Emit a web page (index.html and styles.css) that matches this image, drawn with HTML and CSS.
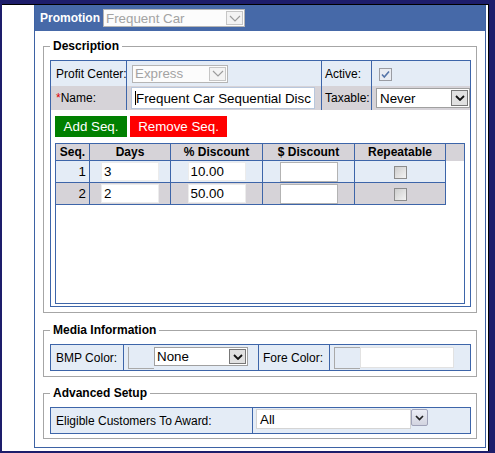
FILE: index.html
```html
<!DOCTYPE html>
<html lang="en">
<head>
<meta charset="utf-8">
<title>Promotion</title>
<link rel="stylesheet" href="styles.css">
</head>
<body>
<div class="window">
  <div class="client">
    <div class="main">
      <div class="titlebar">
        <span class="title">Promotion</span>
        <div class="sel dis sel-promo">
          <span class="sv">Frequent Car</span>
          <span class="sa"><svg class="chev" width="12" height="7" viewBox="0 0 12 7"><path d="M1 1 L6 6 L11 1"/></svg></span>
        </div>
      </div>

      <fieldset class="fs fs-desc">
        <legend>Description</legend>
        <div class="outer">
          <div class="props">
            <div class="cell lbl c1 lt">Profit Center:</div>
            <div class="cell c2 lt">
              <div class="sel dis sel-pc">
                <span class="sv">Express</span>
                <span class="sa"><svg class="chev" width="12" height="7" viewBox="0 0 12 7"><path d="M1 1 L6 6 L11 1"/></svg></span>
              </div>
            </div>
            <div class="cell lbl c3 lt">Active:</div>
            <div class="cell c4 lt">
              <svg class="chk" width="13" height="13" viewBox="0 0 13 13"><rect x="0.5" y="0.5" width="12" height="12" fill="#e9ecf2" stroke="#9a9ca3"/><path d="M3 6.5 L5.3 9 L10 3.5" fill="none" stroke="#5574a8" stroke-width="1.6"/></svg>
            </div>
            <div class="cell lbl c1 gr"><span class="req">*</span>Name:</div>
            <div class="cell c2 gr">
              <span class="namewrap"><input class="name" type="text" value="Frequent Car Sequential Discount"><span class="caret"></span></span>
            </div>
            <div class="cell lbl c3 gr">Taxable:</div>
            <div class="cell c4 gr">
              <div class="sel en sel-tax">
                <span class="sv">Never</span>
                <span class="sa"><svg class="chev" width="10" height="6" viewBox="0 0 10 6"><path d="M1 1 L5 5 L9 1"/></svg></span>
              </div>
            </div>
          </div>

          <div class="actions">
            <button class="btn btn-add" type="button">Add Seq.</button>
            <button class="btn btn-rem" type="button">Remove Seq.</button>
          </div>

          <div class="gridbox">
            <table class="grid">
              <thead>
                <tr>
                  <th class="w-seq">Seq.</th>
                  <th class="w-days">Days</th>
                  <th class="w-pct">% Discount</th>
                  <th class="w-amt">$ Discount</th>
                  <th class="w-rep">Repeatable</th>
                  <th class="w-fill fill"></th>
                </tr>
              </thead>
              <tbody>
                <tr class="odd">
                  <td class="num">1</td>
                  <td><input class="gin" type="text" value="3"></td>
                  <td><input class="gin" type="text" value="10.00"></td>
                  <td><input class="gin amt" type="text" value=""></td>
                  <td><span class="cb"></span></td>
                  <td class="fill"></td>
                </tr>
                <tr class="even">
                  <td class="num">2</td>
                  <td><input class="gin" type="text" value="2"></td>
                  <td><input class="gin" type="text" value="50.00"></td>
                  <td><input class="gin amt" type="text" value=""></td>
                  <td><span class="cb"></span></td>
                  <td class="fill"></td>
                </tr>
              </tbody>
            </table>
          </div>
        </div>
      </fieldset>

      <fieldset class="fs fs-media">
        <legend>Media Information</legend>
        <div class="outer">
          <div class="mrow">
            <div class="cell lbl m1">BMP Color:</div>
            <div class="cell m2">
              <span class="swatch sw-bmp"></span>
              <div class="sel en sel-none">
                <span class="sv">None</span>
                <span class="sa"><svg class="chev" width="10" height="6" viewBox="0 0 10 6"><path d="M1 1 L5 5 L9 1"/></svg></span>
              </div>
            </div>
            <div class="cell lbl m3">Fore Color:</div>
            <div class="cell m4">
              <span class="swatch sw-fore"></span>
              <input class="fore" type="text" value="">
            </div>
          </div>
        </div>
      </fieldset>

      <fieldset class="fs fs-adv">
        <legend>Advanced Setup</legend>
        <div class="outer">
          <div class="arow">
            <div class="cell lbl a1">Eligible Customers To Award:</div>
            <div class="cell a2">
              <div class="sel-all">
                <span class="av">All</span>
                <span class="ab"><svg width="9" height="6" viewBox="0 0 9 6"><path d="M1 1 L4.5 4.5 L8 1" fill="none" stroke="#222" stroke-width="1.7"/></svg></span>
              </div>
            </div>
          </div>
        </div>
      </fieldset>
    </div>
  </div>
</div>
</body>
</html>
```

FILE: styles.css
```css
* { box-sizing: border-box; }

html, body {
  margin: 0;
  padding: 0;
}

body {
  width: 495px;
  height: 453px;
  overflow: hidden;
  background: #fff;
  font-family: "Liberation Sans", Arial, sans-serif;
  font-size: 12px;
  color: #000;
}

.window {
  width: 495px;
  height: 453px;
  border-style: solid;
  border-color: #1d1d6b;
  border-width: 4px 6px 2px 2px;
  background: #fff;
}

.client {
  height: 447px;
  border-top: 1px solid #000;
  border-right: 1px solid #000;
  padding-left: 32px;
  display: flex;
}

.main {
  width: 452px;
  height: 443px;
  border: 1px solid #3d62a4;
  border-top: 0;
  display: flex;
  flex-direction: column;
}

/* title bar */
.titlebar {
  height: 26px;
  flex: none;
  background: #4669a8;
  display: flex;
  align-items: center;
  padding-left: 5px;
  gap: 3px;
}

.title {
  color: #fff;
  font-weight: bold;
  font-size: 12px;
}

/* fake selects */
.sel {
  display: flex;
  background: #fff;
  font-size: 13.33px;
  border: 1px solid #a9a9a9;
}

.sel .sv {
  flex: 1;
  padding-left: 2px;
  white-space: nowrap;
  overflow: hidden;
  display: flex;
  align-items: center;
}

.sel .sa {
  width: 19px;
  flex: none;
  display: flex;
  align-items: center;
  justify-content: center;
}

.chev path {
  fill: none;
}

.dis {
  color: #a3a3a3;
  border-color: #b5b5b5;
  background: #fcfcfc;
}

.dis .sa {
  border: 1px solid #c6c6c6;
  background: #f3f3f3;
  margin: 1px;
  width: 17px;
}

.dis .chev path {
  stroke: #9c9c9c;
  stroke-width: 1.2;
}

.en {
  border-color: #a0a0a0;
}

.en .sa {
  background: #e1e1e1;
  border: 1px solid #777;
  margin: 1px;
  width: 17px;
}

.en .chev path {
  stroke: #111;
  stroke-width: 1.8;
}

.sel-promo {
  width: 142px;
  height: 18px;
}

.sel-pc {
  width: 96px;
  height: 18px;
  margin-left: 1px;
}

.sel-tax {
  width: 94px;
  height: 20px;
}

.sel-tax .sv {
  padding-left: 3px;
}

/* fieldsets */
.fs {
  margin: 0 8px;
  border: 1px solid #a6a6a6;
  padding: 6px 5px 5px 6px;
  min-width: 0;
}

.fs legend {
  font-weight: bold;
  font-size: 12px;
  line-height: 15px;
  padding: 0 3px;
  margin: 0;
}

.fs-desc { margin-top: 8px; }
.fs-media { margin-top: 10px; }
.fs-adv { margin-top: 9px; padding-bottom: 4px; }

.outer {
  width: 421px;
  border: 1px solid #3d65a9;
}

.cell {
  display: flex;
  align-items: center;
  border-right: 1px solid #3d65a9;
  white-space: nowrap;
}

.lt { background: #e4ecf6; }
.gr { background: #d6d3d8; }

/* description properties */
.props {
  display: grid;
  grid-template-columns: 76px 195px 50px 98px;
  grid-template-rows: 25px 24px;
}

.c1 { padding-left: 5px; }
.c2 { padding-left: 4px; }
.c3 { padding-left: 3px; }
.c4 { padding-left: 4px; border-right: 0; }

.chk {
  display: block;
  margin-left: 3px;
  margin-top: 1px;
}

.req { color: #e00000; }

.namewrap {
  position: relative;
  display: block;
}

.name {
  display: block;
  width: 184px;
  height: 22px;
  margin: 0;
  border: 1px solid #b9c7dc;
  padding: 0 3px 0 4px;
  font-family: "Liberation Sans", Arial, sans-serif;
  font-size: 13.33px;
  color: #000;
  background: #fff;
  outline: none;
}

.caret {
  position: absolute;
  left: 4px;
  top: 4px;
  width: 1px;
  height: 14px;
  background: #000;
}

/* buttons */
.actions {
  display: flex;
  gap: 3px;
  padding: 6px 0 0 4px;
}

.btn {
  height: 21px;
  padding: 0 8px;
  margin: 0;
  border: 0;
  color: #fff;
  font-family: "Liberation Sans", Arial, sans-serif;
  font-size: 13.33px;
  line-height: 21px;
}

.btn-add { background: #008000; width: 72px; }
.btn-rem { background: #ff0000; width: 97px; }

/* grid */
.gridbox {
  margin: 6px 5px 2px 4px;
  height: 161px;
  border: 1px solid #3d65a9;
  background: #fff;
}

.grid {
  border-collapse: separate;
  border-spacing: 0;
  table-layout: fixed;
  width: 408px;
}

.grid th,
.grid td {
  padding: 0;
  border-right: 1px solid #3d65a9;
  border-bottom: 1px solid #3d65a9;
}

.grid th {
  height: 17px;
  background: #d6d3d8;
  font-weight: bold;
  font-size: 12px;
  line-height: 14px;
  text-align: center;
}

.grid td {
  height: 22px;
  text-align: center;
}

.w-seq { width: 34px; }
.w-days { width: 81px; }
.w-pct { width: 92px; }
.w-amt { width: 92px; }
.w-rep { width: 91px; }
.w-fill { width: 18px; }

.grid .fill {
  border-right: 0;
  border-bottom: 0;
}

.grid td.fill { background: #fff; }

.odd td { background: #e4ecf6; }
.even td { background: #d6d3d8; }

.grid td.num {
  text-align: right;
  padding-right: 3px;
  font-size: 13.33px;
}

.gin {
  display: block;
  margin: 0 auto;
  width: 58px;
  height: 19px;
  padding: 0 2px;
  border: 1px solid #ececec;
  background: #fff;
  font-family: "Liberation Sans", Arial, sans-serif;
  font-size: 13.33px;
  color: #000;
  outline: none;
}

.gin.amt {
  border-color: #b3b3b3;
  height: 20px;
}

.cb {
  display: inline-block;
  vertical-align: middle;
  width: 13px;
  height: 13px;
  border: 1px solid #8c8c8c;
  background: linear-gradient(135deg, #cdcdcd, #f3f3f3);
}

/* media */
.mrow {
  display: grid;
  grid-template-columns: 73px 135px 71px 140px;
  height: 25px;
  background: #e4ecf6;
}

.m1 { padding-left: 5px; }
.m3 { padding-left: 4px; }

.m2,
.m4 {
  align-items: flex-start;
  padding: 2px 0 0 4px;
}

.m4 { border-right: 0; }

.swatch {
  display: block;
  width: 26px;
  height: 22px;
  flex: none;
}

.sw-bmp {
  border-left: 1px solid #a9a9a9;
  border-bottom: 1px solid #a9a9a9;
}

.sw-fore {
  border-left: 1px solid #a9a9a9;
  border-top: 1px solid #a9a9a9;
  border-bottom: 1px solid #a9a9a9;
}

.sel-none {
  width: 94px;
  height: 19px;
}

.fore {
  display: block;
  width: 94px;
  height: 21px;
  margin: 0;
  padding: 0 2px;
  border: 1px solid #e2e2e2;
  background: #fff;
  outline: none;
}

/* advanced */
.arow {
  display: grid;
  grid-template-columns: 202px 217px;
  height: 25px;
  background: #e4ecf6;
}

.a1 { padding-left: 5px; }

.a2 {
  border-right: 0;
  align-items: flex-start;
  padding: 1px 0 0 3px;
}

.sel-all {
  display: flex;
  align-items: flex-start;
}

.av {
  display: flex;
  align-items: center;
  width: 155px;
  height: 20px;
  padding-left: 3px;
  background: #fff;
  border: 1px solid #d4d4d4;
  font-size: 13.33px;
}

.ab {
  width: 17px;
  height: 17px;
  display: flex;
  align-items: center;
  justify-content: center;
  border: 1px solid #9fa2b8;
  border-radius: 2px;
  background: linear-gradient(#eceef5, #d2d4e0);
}
```
